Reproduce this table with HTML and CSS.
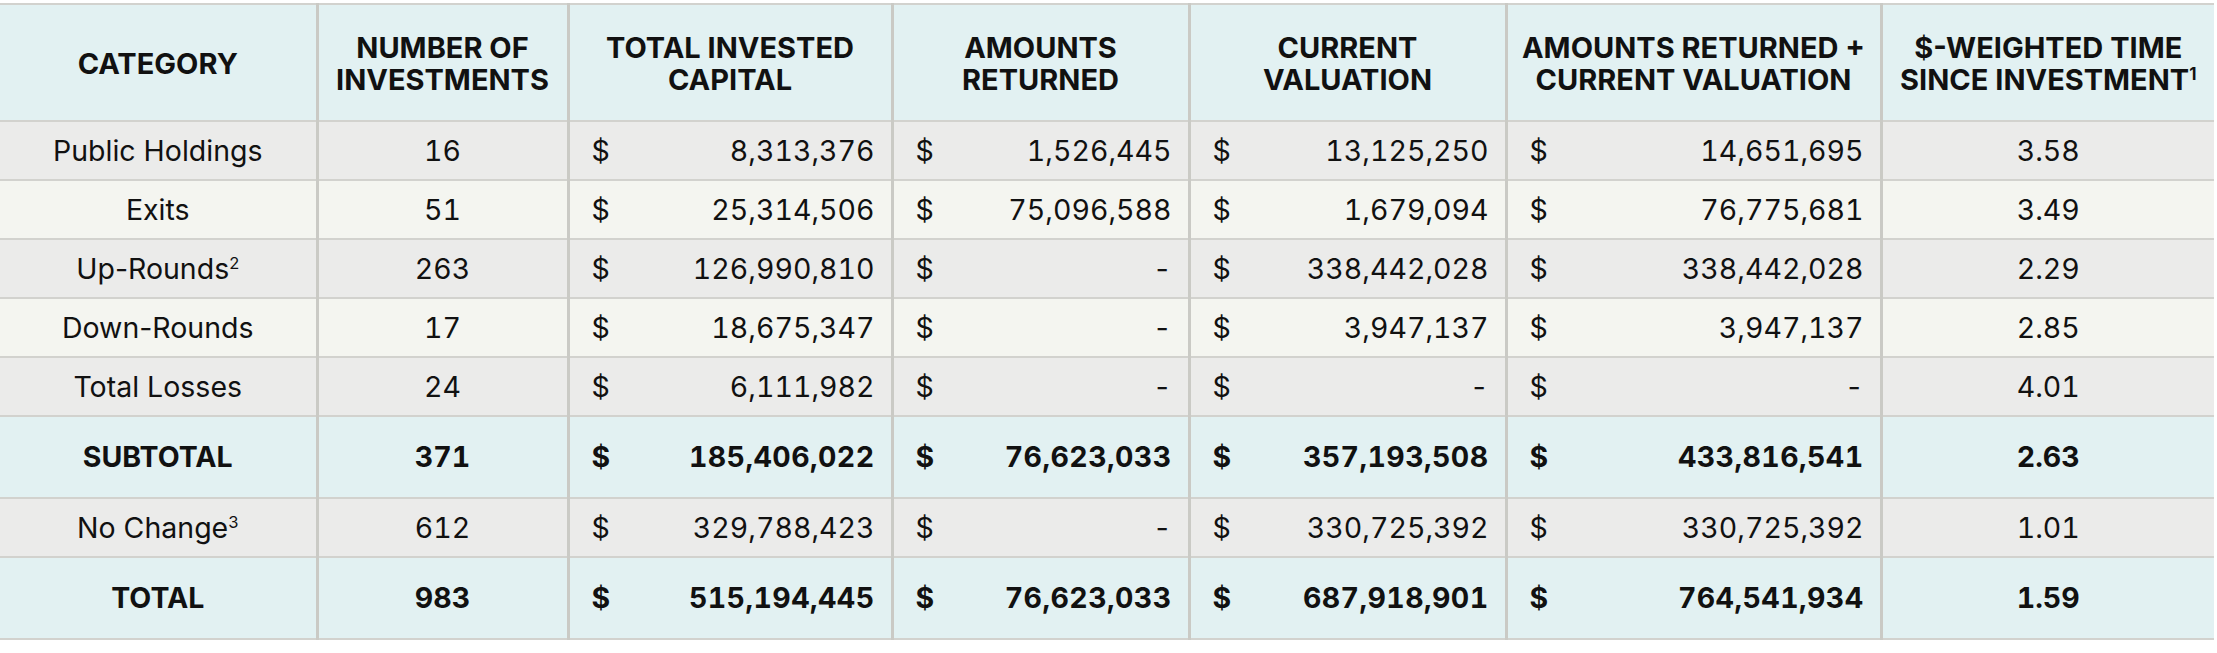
FILE: index.html
```html
<!DOCTYPE html>
<html>
<head>
<meta charset="utf-8">
<link rel="stylesheet" href="styles.css">
</head>
<body>
<table class="grid">
  <colgroup>
    <col class="c-cat">
    <col class="c-num">
    <col class="c-inv">
    <col class="c-ret">
    <col class="c-val">
    <col class="c-sum">
    <col class="c-time">
  </colgroup>
  <thead>
    <tr class="head">
      <th>CATEGORY</th>
      <th>NUMBER OF<br>INVESTMENTS</th>
      <th>TOTAL INVESTED<br>CAPITAL</th>
      <th>AMOUNTS<br>RETURNED</th>
      <th>CURRENT<br>VALUATION</th>
      <th>AMOUNTS RETURNED +<br>CURRENT VALUATION</th>
      <th>$-WEIGHTED TIME<br>SINCE INVESTMENT<sup>1</sup></th>
    </tr>
  </thead>
  <tbody>
    <tr class="row gray">
      <td class="cat">Public Holdings</td>
      <td class="ctr">16</td>
      <td class="money"><span class="cur">$</span>8,313,376</td>
      <td class="money"><span class="cur">$</span>1,526,445</td>
      <td class="money"><span class="cur">$</span>13,125,250</td>
      <td class="money"><span class="cur">$</span>14,651,695</td>
      <td class="ctr">3.58</td>
    </tr>
    <tr class="row light">
      <td class="cat">Exits</td>
      <td class="ctr">51</td>
      <td class="money"><span class="cur">$</span>25,314,506</td>
      <td class="money"><span class="cur">$</span>75,096,588</td>
      <td class="money"><span class="cur">$</span>1,679,094</td>
      <td class="money"><span class="cur">$</span>76,775,681</td>
      <td class="ctr">3.49</td>
    </tr>
    <tr class="row gray">
      <td class="cat">Up-Rounds<sup>2</sup></td>
      <td class="ctr">263</td>
      <td class="money"><span class="cur">$</span>126,990,810</td>
      <td class="money"><span class="cur">$</span>-</td>
      <td class="money"><span class="cur">$</span>338,442,028</td>
      <td class="money"><span class="cur">$</span>338,442,028</td>
      <td class="ctr">2.29</td>
    </tr>
    <tr class="row light">
      <td class="cat">Down-Rounds</td>
      <td class="ctr">17</td>
      <td class="money"><span class="cur">$</span>18,675,347</td>
      <td class="money"><span class="cur">$</span>-</td>
      <td class="money"><span class="cur">$</span>3,947,137</td>
      <td class="money"><span class="cur">$</span>3,947,137</td>
      <td class="ctr">2.85</td>
    </tr>
    <tr class="row gray">
      <td class="cat">Total Losses</td>
      <td class="ctr">24</td>
      <td class="money"><span class="cur">$</span>6,111,982</td>
      <td class="money"><span class="cur">$</span>-</td>
      <td class="money"><span class="cur">$</span>-</td>
      <td class="money"><span class="cur">$</span>-</td>
      <td class="ctr">4.01</td>
    </tr>
    <tr class="sum">
      <td class="cat">SUBTOTAL</td>
      <td class="ctr">371</td>
      <td class="money"><span class="cur">$</span>185,406,022</td>
      <td class="money"><span class="cur">$</span>76,623,033</td>
      <td class="money"><span class="cur">$</span>357,193,508</td>
      <td class="money"><span class="cur">$</span>433,816,541</td>
      <td class="ctr">2.63</td>
    </tr>
    <tr class="row gray">
      <td class="cat">No Change<sup>3</sup></td>
      <td class="ctr">612</td>
      <td class="money"><span class="cur">$</span>329,788,423</td>
      <td class="money"><span class="cur">$</span>-</td>
      <td class="money"><span class="cur">$</span>330,725,392</td>
      <td class="money"><span class="cur">$</span>330,725,392</td>
      <td class="ctr">1.01</td>
    </tr>
    <tr class="sum">
      <td class="cat">TOTAL</td>
      <td class="ctr">983</td>
      <td class="money"><span class="cur">$</span>515,194,445</td>
      <td class="money"><span class="cur">$</span>76,623,033</td>
      <td class="money"><span class="cur">$</span>687,918,901</td>
      <td class="money"><span class="cur">$</span>764,541,934</td>
      <td class="ctr">1.59</td>
    </tr>
  </tbody>
</table>
</body>
</html>
```

FILE: styles.css
```css
html, body {
  margin: 0;
  padding: 0;
  background: #ffffff;
}

body {
  padding-top: 3px;
  font-family: "Inter", "Liberation Sans", sans-serif;
  color: #111111;
}

.grid {
  border-collapse: collapse;
  table-layout: fixed;
  width: 2214px;
  font-size: 28.5px;
}

.c-cat { width: 317px; }
.c-num { width: 251px; }
.c-inv { width: 324px; }
.c-ret { width: 297px; }
.c-val { width: 317px; }
.c-sum { width: 375px; }
.c-time { width: 333px; }

.grid th,
.grid td {
  border-top: 2px solid #d2d2ce;
  border-bottom: 2px solid #d2d2ce;
  border-left: 3px solid #cacac5;
  border-right: 3px solid #cacac5;
  padding: 0 16px 0 22px;
  vertical-align: middle;
  white-space: nowrap;
  line-height: 32px;
}

.grid tr > :first-child { border-left: none; }
.grid tr > :last-child { border-right: none; }

.head th {
  height: 113px;
  background: #e2f1f2;
  font-size: 29px;
  font-weight: 700;
  text-align: center;
  padding: 2px 2px 0;
}

.row td {
  height: 57px;
}

.gray td { background: #ebebea; }
.light td { background: #f4f5f0; }

.sum td {
  height: 80px;
  background: #e2f1f2;
  font-weight: 700;
}

.cat,
.ctr {
  text-align: center;
  padding-left: 4px !important;
  padding-right: 4px !important;
}

.ctr,
.money {
  font-variant-numeric: tabular-nums;
}

.money { text-align: right; }

.sum .money { letter-spacing: 0.4px; }

.cur {
  float: left;
}

sup {
  font-size: 0.58em;
  line-height: 0;
  vertical-align: 0.62em;
  font-weight: 400;
}

th sup { font-weight: 700; }
```
